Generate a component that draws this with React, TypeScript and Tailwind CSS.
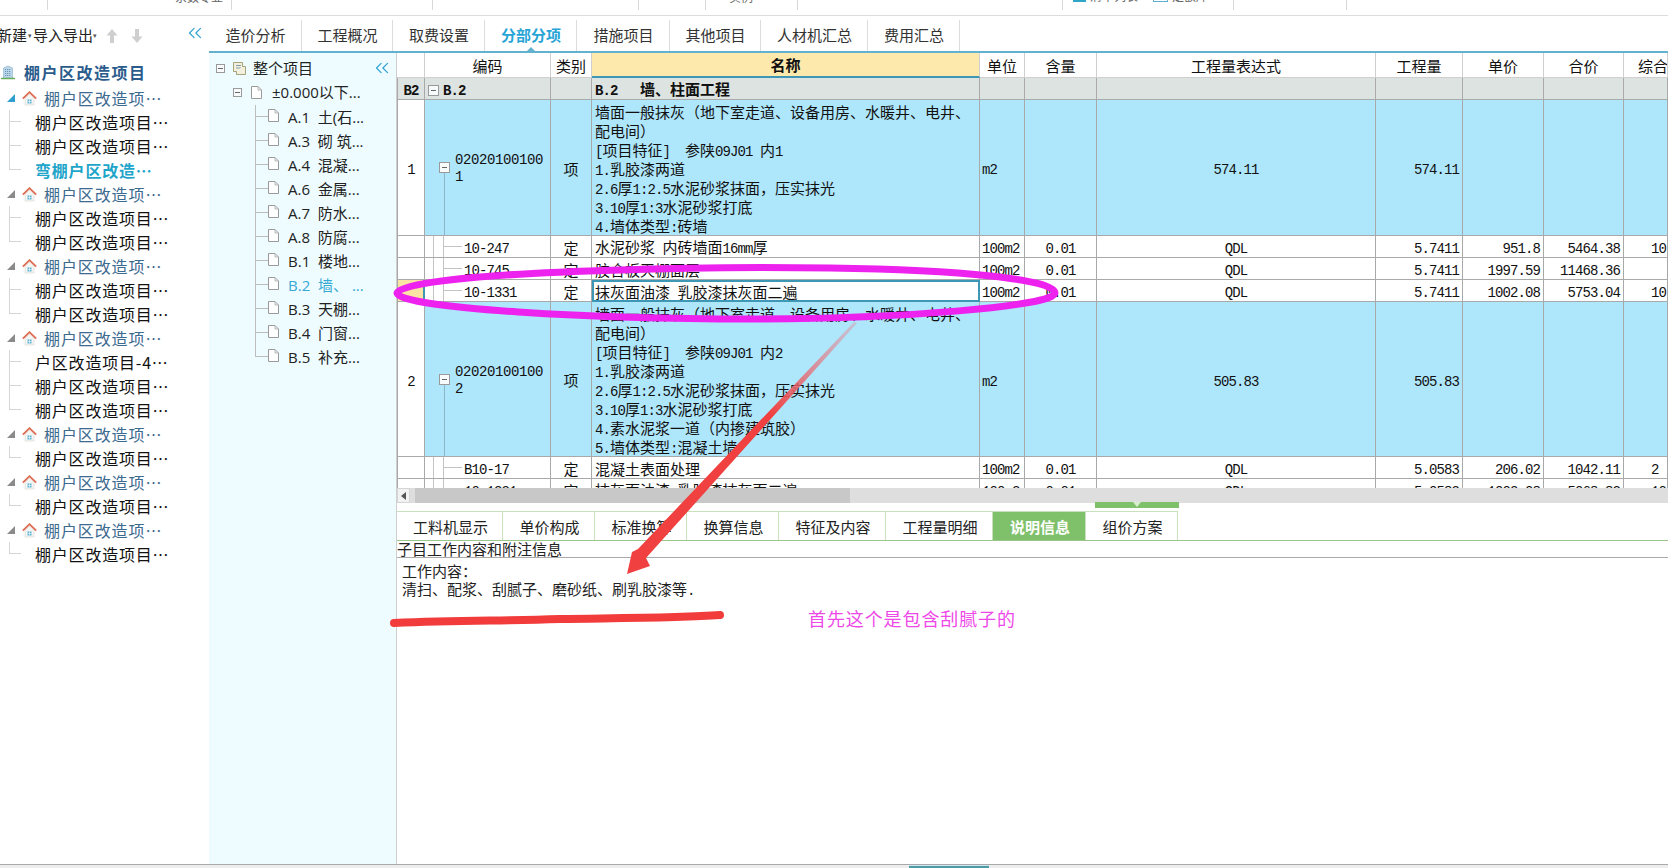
import { ChevronsLeft } from 'lucide-react';

const gridCols =
  'grid grid-cols-[28px_126px_41px_388px_45px_72px_279px_87px_81px_80px_1fr]';

// the grid prints latin in a half-width font, so split text into runs
function Mix({ t, bold }: { t: string; bold?: boolean }) {
  const runs = t.split(/([\x20-\x7e]+)/).filter(Boolean);
  return (
    <span className="whitespace-pre">
      {runs.map((r, i) =>
        /^[\x20-\x7e]+$/.test(r) ? (
          <span
            key={i}
            className={`font-['Liberation_Mono',monospace] text-[14px] tracking-[-0.9px] ${bold ? 'font-bold' : ''}`}
          >
            {r}
          </span>
        ) : (
          <span key={i} className={bold ? 'font-bold' : ''}>
            {r}
          </span>
        ),
      )}
    </span>
  );
}

function HouseIcon() {
  return (
    <svg width="15" height="15" viewBox="0 0 15 15" className="shrink-0">
      <path d="M3 7v7h9V7L7.5 3z" fill="#f4f6f6" stroke="#d9d4c8" strokeWidth="0.6" />
      <path d="M0.8 7.6 7.5 1.2l6.7 6.4" fill="none" stroke="#df6c52" strokeWidth="1.8" />
      <rect x="5.5" y="8.5" width="4" height="4" fill="#5db5d4" />
      <path d="M7.5 8.5v4M5.5 10.5h4" stroke="#fff" strokeWidth="0.6" />
    </svg>
  );
}

function BuildingIcon() {
  return (
    <svg width="16" height="15" viewBox="0 0 16 15" className="shrink-0">
      <path d="M3.5 13V3L8 1l4.5 2v10z" fill="#bcd6e8" stroke="#86b0cd" strokeWidth="0.6" />
      <path d="M5 4.5h6M5 6.5h6M5 8.5h6M5 10.5h6" stroke="#5f93b8" strokeWidth="0.9" strokeDasharray="1.2 0.8" />
      <path d="M1 13.5h14" stroke="#67ad5a" strokeWidth="1.5" />
    </svg>
  );
}

function DocIcon() {
  return (
    <svg width="11" height="13" viewBox="0 0 11 13" className="shrink-0">
      <path d="M0.5 0.5h6.5l3.5 3.5v8.5h-10z" fill="#fff" stroke="#9a9a9a" />
      <path d="M7 0.5v3.5h3.5" fill="none" stroke="#b5b5b5" />
    </svg>
  );
}

function ProjectIcon() {
  return (
    <svg width="13" height="13" viewBox="0 0 13 13" className="shrink-0">
      <path d="M0.5 0.5h9v9h-9z" fill="#f3f1dd" stroke="#a5a27c" />
      <path d="M3 3.5h5M3 6h5" stroke="#7f9aa8" />
      <path d="M3.5 9.5v3h9v-8h-3" fill="#f3f1dd" stroke="#a5a27c" />
    </svg>
  );
}

function MinusBox({ size = 'w-[9px] h-[9px]' }: { size?: string }) {
  return (
    <span className={`${size} shrink-0 border border-[#9a9a9a] bg-[#f7fbfc] flex items-center justify-center`}>
      <span className="w-[5px] h-px bg-[#666]" />
    </span>
  );
}

function TopStrip() {
  const clipped = '-mt-[11px] text-[12px] leading-[16px] text-[#666] whitespace-pre';
  return (
    <div className="flex h-[16px] shrink-0 border-b border-[#dddddd] bg-white overflow-hidden">
      <div className="w-[48px] h-[10px] border-r border-[#d8d8d8]" />
      <div className="w-[184px] h-[10px] border-r border-[#d8d8d8] pl-[127px]">
        <div className={clipped}>系数专业</div>
      </div>
      <div className="w-[201px] h-[10px] border-r border-[#d8d8d8]" />
      <div className="w-[206px] h-[10px] border-r border-[#d8d8d8]" />
      <div className="w-[67px] h-[10px] border-r border-[#d8d8d8]" />
      <div className="w-[92px] h-[10px] border-r border-[#d8d8d8] pl-[23px]">
        <div className={clipped}>实例</div>
      </div>
      <div className="w-[265px] h-[10px] border-r border-[#d8d8d8]" />
      <div className="w-[171px] h-[10px] border-r border-[#d8d8d8] pl-[10px] flex items-start">
        <span className="w-[13px] h-[2px] bg-[#2fa5c8]" />
        <div className={`${clipped} -mt-[12px] ml-[4px] w-[63px]`}>清单列表</div>
        <span className="w-[15px] h-[2px] border-x border-b border-[#5fb0cf]" />
        <div className={`${clipped} -mt-[12px] ml-[4px]`}>定额库</div>
      </div>
      <div className="w-[113px] h-[10px] border-r border-[#d8d8d8]" />
    </div>
  );
}

const treeGroups = [
  { open: true, kids: ['棚户区改造项目⋯', '棚户区改造项目⋯', '弯棚户区改造⋯'] },
  { kids: ['棚户区改造项目⋯', '棚户区改造项目⋯'] },
  { kids: ['棚户区改造项目⋯', '棚户区改造项目⋯'] },
  { kids: ['户区改造项目-4⋯', '棚户区改造项目⋯', '棚户区改造项目⋯'] },
  { kids: ['棚户区改造项目⋯'] },
  { kids: ['棚户区改造项目⋯'] },
  { kids: ['棚户区改造项目⋯'] },
];

function LeftTree() {
  return (
    <aside className="w-[209px] shrink-0 bg-white overflow-hidden">
      <div className="h-[42px] flex items-start pt-[7px]">
        <span className="-ml-[3px] text-[15px] leading-[24px] text-[#222] whitespace-pre">新建</span>
        <span className="text-[7px] leading-[24px] text-[#555] mx-px">▾</span>
        <span className="text-[15px] leading-[24px] text-[#222] whitespace-pre">导入导出</span>
        <span className="text-[7px] leading-[24px] text-[#555]">▾</span>
        <svg width="12" height="14" viewBox="0 0 12 14" className="ml-[9px] mt-[6px]">
          <path d="M6 0l5.5 6.5H8V14H4V6.5H.5z" fill="#cfcfcf" />
        </svg>
        <svg width="12" height="14" viewBox="0 0 12 14" className="ml-[13px] mt-[6px]">
          <path d="M6 14 .5 7.5H4V0h4v7.5h3.5z" fill="#cfcfcf" />
        </svg>
        <ChevronsLeft size={22} strokeWidth={1.4} className="ml-auto mr-[3px] -mt-[1px] text-[#35a5cf]" />
      </div>
      <div className="h-[28px] flex items-center gap-[8px]">
        <BuildingIcon />
        <span className="text-[16px] font-bold tracking-[1.5px] text-[#2b5c8c] leading-none">棚户区改造项目</span>
      </div>
      {treeGroups.map((g, i) => (
        <div key={i}>
          <div className="h-6 flex items-center pl-[7px]">
            <span
              className={`w-0 h-0 border-b-[8px] border-l-[8px] border-l-transparent ${g.open ? 'border-b-[#2f9fd0]' : 'border-b-[#8a8a8a]'}`}
            />
            <span className="ml-[7px]">
              <HouseIcon />
            </span>
            <span className="ml-[7px] text-[16px] tracking-[0.9px] text-[#3d6b8f] whitespace-nowrap">棚户区改造项⋯</span>
          </div>
          {g.kids.map((k, j) => (
            <div key={j} className="h-6 flex items-stretch">
              <span className="ml-[9px] w-[12px] flex flex-col shrink-0">
                <span className="h-1/2 border-l border-b border-[#d5d5d5]" />
                {j < g.kids.length - 1 && <span className="h-1/2 border-l border-[#d5d5d5]" />}
              </span>
              <span
                className={`ml-[14px] self-center text-[16px] tracking-[0.8px] whitespace-nowrap ${k.startsWith('弯') ? 'font-bold text-[#1ea5c9]' : 'text-[#111]'}`}
              >
                {k}
              </span>
            </div>
          ))}
        </div>
      ))}
    </aside>
  );
}

const mainTabs = [
  { label: '造价分析', w: 'w-[93px]' },
  { label: '工程概况', w: 'w-[91px]' },
  { label: '取费设置', w: 'w-[92px]' },
  { label: '分部分项', w: 'w-[92px]', active: true },
  { label: '措施项目', w: 'w-[93px]' },
  { label: '其他项目', w: 'w-[91px]' },
  { label: '人材机汇总', w: 'w-[107px]' },
  { label: '费用汇总', w: 'w-[92px]' },
];

function MainTabs() {
  return (
    <div className="h-[37px] shrink-0 flex border-b-2 border-[#62b1cf] pt-[4px]">
      {mainTabs.map((t) => (
        <div
          key={t.label}
          className={`${t.w} relative border-r border-[#dcdcdc] flex items-center justify-center pl-px text-[15px] ${t.active ? 'text-[#27a4d6] font-bold' : 'text-[#333]'}`}
        >
          {t.label}
          {t.active && (
            <span className="absolute bottom-0 left-1/2 -translate-x-1/2 w-0 h-0 border-x-[4px] border-x-transparent border-b-[4px] border-b-[#62b1cf]" />
          )}
        </div>
      ))}
    </div>
  );
}

const sections: [string, boolean?][] = [
  ['A.1  土(石...'],
  ['A.3  砌 筑...'],
  ['A.4  混凝...'],
  ['A.6  金属...'],
  ['A.7  防水...'],
  ['A.8  防腐...'],
  ['B.1  楼地...'],
  ['B.2  墙、 ...', true],
  ['B.3  天棚...'],
  ['B.4  门窗...'],
  ['B.5  补充...'],
];

function SectionPanel() {
  return (
    <div className="w-[188px] shrink-0 bg-[#eefcff] border-r border-[#cfcfcf] font-['Open_Sans','Noto_Sans_CJK_SC',sans-serif] text-[15px] text-[#222]">
      <div className="h-[28px] mt-px flex items-center pl-[7px] pr-[3px]">
        <MinusBox />
        <span className="ml-[8px]"><ProjectIcon /></span>
        <span className="ml-[7px]">整个项目</span>
        <ChevronsLeft size={22} strokeWidth={1.4} className="ml-auto text-[#35a5cf]" />
      </div>
      <div className="h-[23px] pb-[3px] flex items-center pl-[24px]">
        <MinusBox />
        <span className="ml-[9px]"><DocIcon /></span>
        <span className="ml-[10px] whitespace-pre">±0.000以下...</span>
      </div>
      {sections.map(([label, active], i) => (
        <div key={label} className="h-6 flex items-stretch">
          <span className="ml-[46px] w-[13px] flex flex-col shrink-0">
            <span className="h-1/2 border-l border-b border-[#bdbdbd]" />
            {i < sections.length - 1 && <span className="h-1/2 border-l border-[#bdbdbd]" />}
          </span>
          <span className="self-center -mt-[4px]"><DocIcon /></span>
          <span className={`ml-[9px] self-center whitespace-pre ${active ? 'text-[#35a9d3]' : ''}`}>{label}</span>
        </div>
      ))}
    </div>
  );
}

const headerCols = ['', '编码', '类别', '名称', '单位', '含量', '工程量表达式', '工程量', '单价', '合价', '综合'];

function Cell({ className = '', children }: { className?: string; children?: React.ReactNode }) {
  return (
    <div className={`border-r border-b border-[#a9a9a9] pt-[3px] flex items-center overflow-hidden whitespace-nowrap ${className}`}>
      {children}
    </div>
  );
}

type Child = {
  code: string;
  name: string;
  qty: string;
  price: string;
  total: string;
  comp?: string;
  selected?: boolean;
};

function ChildRow({ r }: { r: Child }) {
  return (
    <div className={`${gridCols} h-[22px] bg-white`}>
      <Cell className={`border-l ${r.selected ? 'bg-[#fbe3a4] border-r-2! border-r-[#3f97b6]!' : ''}`} />
      <Cell className="items-stretch pt-0!">
        <span className="w-[9px] shrink-0 border-r border-[#c4c4c4]" />
        <span className="w-[10px] shrink-0 border-r border-[#c4c4c4]" />
        <span className="w-[18px] shrink-0 h-1/2 border-b border-[#c4c4c4]" />
        <span className="self-center ml-[2px] pt-[3px]"><Mix t={r.code} /></span>
      </Cell>
      <Cell className="justify-center">定</Cell>
      <Cell className={r.selected ? 'pl-px border-2! border-[#3f97b6]!' : 'pl-[3px]'}><Mix t={r.name} /></Cell>
      <Cell className="pl-[2px]"><Mix t="100m2" /></Cell>
      <Cell className="justify-center"><Mix t="0.01" /></Cell>
      <Cell className="justify-center"><Mix t="QDL" /></Cell>
      <Cell className="justify-end pr-[3px]"><Mix t={r.qty} /></Cell>
      <Cell className="justify-end pr-[3px]"><Mix t={r.price} /></Cell>
      <Cell className="justify-end pr-[3px]"><Mix t={r.total} /></Cell>
      <Cell className="pl-[27px]"><Mix t={r.comp ?? ''} /></Cell>
    </div>
  );
}

function ItemRow({ no, code, lines, qty, h }: { no: string; code: string; lines: string[]; qty: string; h: string }) {
  const blue = 'bg-[#aee6fb]';
  return (
    <div className={`${gridCols} ${h}`}>
      <Cell className="border-l justify-center bg-white"><Mix t={no} /></Cell>
      <Cell className={`${blue} items-stretch pt-0!`}>
        <span className="w-[14px] shrink-0" />
        <span className="w-[10px] shrink-0 flex flex-col items-center justify-center">
          <span className="flex-1 w-px" />
          <MinusBox size="w-[11px] h-[11px]" />
          <span className="flex-1 w-px bg-[#8fb6c6]" />
        </span>
        <span className="self-center ml-[6px] pt-[3px] font-['Liberation_Mono',monospace] text-[14px] tracking-[-0.4px] leading-[17px] whitespace-pre">
          {code}
        </span>
      </Cell>
      <Cell className={`${blue} justify-center`}>项</Cell>
      <Cell className={`${blue} pl-[3px] items-start pt-[2px]!`}>
        <div>
          {lines.map((l, i) => (
            <div key={i} className="h-[19px] leading-[19px]"><Mix t={l} /></div>
          ))}
        </div>
      </Cell>
      <Cell className={`${blue} pl-[2px]`}><Mix t="m2" /></Cell>
      <Cell className={blue} />
      <Cell className={`${blue} justify-center`}><Mix t={qty} /></Cell>
      <Cell className={`${blue} justify-end pr-[3px]`}><Mix t={qty} /></Cell>
      <Cell className={blue} />
      <Cell className={blue} />
      <Cell className={blue} />
    </div>
  );
}

function BillGrid() {
  return (
    <div className="h-[435px] overflow-hidden text-[15px] text-[#111] shrink-0">
      <div className={`${gridCols} h-[25px]`}>
        {headerCols.map((h, i) => (
          <div
            key={i}
            className={`flex items-center pt-[2px] whitespace-nowrap overflow-hidden border-r border-b border-[#cfcfcf] ${
              i === 3 ? 'bg-[#fde9ac] font-bold border-b-2 border-b-[#3f97b6] justify-center' : i === 10 ? 'pl-[14px]' : 'justify-center'
            }`}
          >
            {h}
          </div>
        ))}
      </div>
      <div className={`${gridCols} h-[22px] bg-[#dde3e0]`}>
        <Cell className="border-l justify-center"><Mix t="B2" bold /></Cell>
        <Cell className="pl-[3px]">
          <MinusBox size="w-[11px] h-[11px]" />
          <span className="ml-[4px]"><Mix t="B.2" bold /></span>
        </Cell>
        <Cell />
        <Cell className="pl-[3px]"><Mix t="B.2   墙、柱面工程" bold /></Cell>
        <Cell /><Cell /><Cell /><Cell /><Cell /><Cell /><Cell />
      </div>
      <ItemRow
        no="1"
        code={'02020100100\n1'}
        qty="574.11"
        h="h-[136px]"
        lines={[
          '墙面一般抹灰（地下室走道、设备用房、水暖井、电井、',
          '配电间）',
          '[项目特征]  参陕09J01 内1',
          '1.乳胶漆两道',
          '2.6厚1:2.5水泥砂浆抹面，压实抹光',
          '3.10厚1:3水泥砂浆打底',
          '4.墙体类型:砖墙',
        ]}
      />
      <ChildRow r={{ code: '10-247', name: '水泥砂浆 内砖墙面16mm厚', qty: '5.7411', price: '951.8', total: '5464.38', comp: '10' }} />
      <ChildRow r={{ code: '10-745', name: '胶合板天棚面层', qty: '5.7411', price: '1997.59', total: '11468.36' }} />
      <ChildRow r={{ code: '10-1331', name: '抹灰面油漆 乳胶漆抹灰面二遍', qty: '5.7411', price: '1002.08', total: '5753.04', comp: '10', selected: true }} />
      <ItemRow
        no="2"
        code={'02020100100\n2'}
        qty="505.83"
        h="h-[155px]"
        lines={[
          '墙面一般抹灰（地下室走道、设备用房、水暖井、电井、',
          '配电间）',
          '[项目特征]  参陕09J01 内2',
          '1.乳胶漆两道',
          '2.6厚1:2.5水泥砂浆抹面，压实抹光',
          '3.10厚1:3水泥砂浆打底',
          '4.素水泥浆一道（内掺建筑胶）',
          '5.墙体类型:混凝土墙',
        ]}
      />
      <ChildRow r={{ code: 'B10-17', name: '混凝土表面处理', qty: '5.0583', price: '206.02', total: '1042.11', comp: '2' }} />
      <ChildRow r={{ code: '10-1331', name: '抹灰面油漆 乳胶漆抹灰面二遍', qty: '5.0583', price: '1002.08', total: '5068.82', comp: '10' }} />
    </div>
  );
}

function ScrollBar() {
  return (
    <div className="h-[15px] shrink-0 bg-[#dedede] flex items-center">
      <span className="w-[13px] h-full bg-[#f2f2f2] border border-[#d5d5d5] flex items-center justify-center">
        <span className="w-0 h-0 border-y-[4px] border-y-transparent border-r-[5px] border-r-[#555]" />
      </span>
      <span className="ml-[5px] w-[435px] h-full bg-[#c8c8c8]" />
    </div>
  );
}

const lowerTabs = [
  { label: '工料机显示', w: 'w-[106px]' },
  { label: '单价构成', w: 'w-[92px]' },
  { label: '标准换算', w: 'w-[92px]' },
  { label: '换算信息', w: 'w-[92px]' },
  { label: '特征及内容', w: 'w-[107px]' },
  { label: '工程量明细', w: 'w-[107px]' },
  { label: '说明信息', w: 'w-[93px]', active: true },
  { label: '组价方案', w: 'w-[92px]' },
];

function LowerPane() {
  return (
    <div className="flex-1 flex flex-col text-[15px] text-[#222] relative">
      <div className="absolute left-[698px] -top-px w-[84px] h-[6px] bg-[#7fc06a] flex justify-center">
        <span className="w-0 h-0 border-x-[4px] border-x-transparent border-t-[5px] border-t-[#d8efcd]" />
      </div>
      <div className="h-[38px] shrink-0 pt-[8px] flex border-b border-[#9cc58c]">
        {lowerTabs.map((t) => (
          <div
            key={t.label}
            className={`${t.w} flex items-center justify-center pl-[2px] pt-[2px] border-t border-r border-[#c7e2ba] ${t.active ? 'bg-[#7fc06a] text-white font-bold' : ''}`}
          >
            {t.label}
          </div>
        ))}
      </div>
      <div className="h-[17px] shrink-0 border-b border-[#aaaaaa] leading-[16px] whitespace-nowrap">子目工作内容和附注信息</div>
      <div className="pl-[5px] pt-[4px] leading-[18px]">
        <div>工作内容：</div>
        <div><Mix t="清扫、配浆、刮腻子、磨砂纸、刷乳胶漆等." /></div>
      </div>
    </div>
  );
}

function Annotations() {
  return (
    <>
      <svg
        className="absolute inset-0 pointer-events-none"
        width="1668"
        height="868"
        viewBox="0 0 1668 868"
      >
        <defs>
          <linearGradient id="arrowFade" x1="856" y1="323" x2="770" y2="415" gradientUnits="userSpaceOnUse">
            <stop offset="0" stopColor="#d9a0b0" stopOpacity="0.5" />
            <stop offset="1" stopColor="#f04040" />
          </linearGradient>
        </defs>
        <path
          d="M397 293C398 283 480 274 620 270C700 267 760 267 830 268C960 270 1054 279 1055 293C1055 306 900 319 750 319C600 319 400 309 397 293Z"
          fill="none"
          stroke="#ee22ee"
          strokeWidth="7"
          strokeLinejoin="round"
        />
        <path
          d="M857 323L646 558L650 566L627 574L632 552L638 549L854 322Z"
          fill="url(#arrowFade)"
        />
        <path
          d="M394 623C460 620 500 621 560 619C620 618 680 618 720 615"
          fill="none"
          stroke="#f23c3c"
          strokeWidth="8"
          strokeLinecap="round"
        />
      </svg>
      <div className="absolute left-[808px] top-[606px] text-[18px] tracking-[0.9px] leading-[24px] text-[#ee48e8] whitespace-nowrap">
        首先这个是包含刮腻子的
      </div>
    </>
  );
}

export default function App() {
  return (
    <div className="relative w-[1668px] h-[868px] overflow-hidden bg-white flex flex-col font-['Noto_Sans_CJK_SC',sans-serif]">
      <TopStrip />
      <div className="flex-1 flex min-h-0">
        <LeftTree />
        <div className="flex-1 flex flex-col min-w-0">
          <MainTabs />
          <div className="flex-1 flex min-h-0">
            <SectionPanel />
            <div className="flex-1 flex flex-col min-w-0">
              <BillGrid />
              <ScrollBar />
              <LowerPane />
            </div>
          </div>
        </div>
      </div>
      <div className="h-[4px] shrink-0 border-t border-[#aaaaaa] bg-[#eeeeee]">
        <div className="ml-[909px] w-[80px] h-full bg-[#cfe9f5] border-b-2 border-[#4f9aa5]" />
      </div>
      <Annotations />
    </div>
  );
}
